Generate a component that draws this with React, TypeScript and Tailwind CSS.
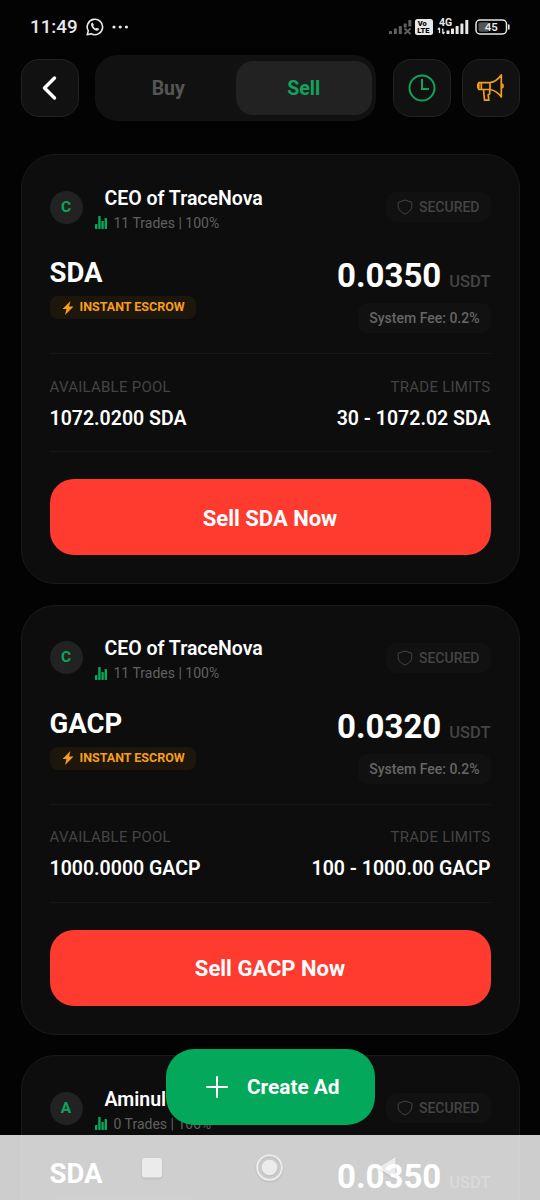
import { useState } from 'react';

type Ad = {
  name: string;
  trades: number;
  coin: string;
  price: string;
  pool: string;
  limits: string;
};

const ads: Ad[] = [
  { name: 'CEO of TraceNova', trades: 11, coin: 'SDA', price: '0.0350', pool: '1072.0200', limits: '30 - 1072.02' },
  { name: 'CEO of TraceNova', trades: 11, coin: 'GACP', price: '0.0320', pool: '1000.0000', limits: '100 - 1000.00' },
  { name: 'Aminul', trades: 0, coin: 'SDA', price: '0.0350', pool: '1072.0200', limits: '30 - 1072.02' },
];

function StatusBar() {
  return (
    <div className="flex h-[54px] shrink-0 items-center pl-[30px] pr-[29px] text-[#e8e8e8]">
      <span className="text-[18.8px] leading-5 font-medium">11:49</span>
      <svg className="ml-[8px]" width="18" height="18" viewBox="0 0 18 18" fill="none">
        <path d="M1.2 16.8 2.3 12.9A7.7 7.7 0 1 1 5.2 15.7Z" stroke="currentColor" strokeWidth="1.6" strokeLinejoin="round" />
        <path d="M5.1 6c.3-1 1.3-1.5 1.8-1l1 2-.7 1.1c.5 1.2 1.4 2 2.6 2.5l1-.9 2.1 1c.3.8-.6 2-1.9 2C8 12.6 4.8 9 5.1 6Z" fill="currentColor" />
      </svg>
      <svg className="ml-2" width="18" height="4" viewBox="0 0 18 4" fill="currentColor">
        <circle cx="2" cy="2" r="1.6" />
        <circle cx="8.2" cy="2" r="1.6" />
        <circle cx="14.4" cy="2" r="1.6" />
      </svg>
      <svg className="ml-auto" width="122" height="18" viewBox="0 0 122 18" fill="currentColor">
        <g fill="#606060">
          <rect x="0" y="13" width="3" height="3" rx=".6" />
          <rect x="4.9" y="10.5" width="3" height="5.5" rx=".6" />
          <rect x="9.8" y="8" width="3" height="8" rx=".6" />
          <rect x="14.7" y="5.5" width="3" height="4" rx=".6" />
          <rect x="19.3" y="2" width="3" height="6.5" rx=".6" />
          <path d="m15.5 10.5 6 5.5m0-5.5-6 5.5" stroke="#606060" strokeWidth="1.8" />
        </g>
        <rect x="26" y="1" width="18" height="16" rx="2.5" />
        <text x="28.8" y="8.3" fontSize="7.5" fontWeight="900" fill="#050505">Vo</text>
        <text x="28.3" y="15.3" fontSize="7.5" fontWeight="900" fill="#050505">LTE</text>
        <text x="50" y="8.3" fontSize="10.5" fontWeight="700">4G</text>
        <path d="M50.5 10v5M48.8 11.6l1.7-2M53.8 10.5v5M55.5 14l-1.7 2" stroke="currentColor" strokeWidth="1.3" />
        <rect x="57.5" y="12.5" width="3" height="3.5" rx=".5" />
        <rect x="62" y="10.5" width="3" height="5.5" rx=".5" />
        <rect x="66.6" y="8" width="3" height="8" rx=".5" />
        <rect x="71.4" y="5.5" width="3" height="10.5" rx=".5" />
        <rect x="76.3" y="2" width="3" height="14" rx=".5" />
        <rect x="87" y="2" width="30.5" height="14" rx="4" fill="none" stroke="currentColor" strokeWidth="1.5" />
        <path d="M89.5 6.2a2 2 0 0 1 2-2H99v9.6h-7.5a2 2 0 0 1-2-2Z" fill="#555" />
        <path d="M119.8 7v4" stroke="currentColor" strokeWidth="1.6" strokeLinecap="round" />
        <text x="102.3" y="13.3" fontSize="11.5" fontWeight="600" textAnchor="middle">45</text>
      </svg>
    </div>
  );
}

function MegaphoneIcon() {
  return (
    <svg className="shrink-0" width="28" height="28" viewBox="0 0 28 28" fill="none" stroke="#f59e1b" strokeWidth="1.7" strokeLinejoin="round">
      <path d="M1.8 8.7H13v6.800H1.800zM4.300 8.700v6.800M13 8.700c4.500-.7 8-3.200 11.300-7.700v22c-3.300-4.500-6.800-6.800-11.300-7.500" />
      <path d="M1.8 10.2H.8v3.600h1M24.500 10c2.200.3 2.200 3.700 0 4M6.500 15.500l1 10.700h4.300l-.6-5.400 1.500-1v-4.300" />
    </svg>
  );
}

function BarsIcon() {
  return (
    <svg className="shrink-0" width="12" height="13" viewBox="0 0 12 13" fill="#06a85a">
      <rect x="0" y="8" width="2.4" height="5" rx=".4" />
      <rect x="3.2" y="0" width="2.4" height="13" rx=".4" />
      <rect x="6.4" y="5" width="2.4" height="8" rx=".4" />
      <rect x="9.6" y="2" width="2.4" height="11" rx=".4" />
    </svg>
  );
}

function AdCard({ ad }: { ad: Ad }) {
  return (
    <div className="flex h-[430px] shrink-0 flex-col rounded-[34px] border border-[#191919] bg-[#0d0d0d] px-7 pt-[26px]">
      <div className="flex h-[52px] shrink-0 items-center justify-between">
        <div className="flex items-center">
          <div className="flex size-[33px] items-center justify-center rounded-full bg-[#222] pt-px text-[15.5px] font-bold text-[#10a35d]">
            {ad.name[0]}
          </div>
          <div className="ml-3 pt-[7px]">
            <p className="ml-[10px] text-[19.5px] leading-6 font-semibold">{ad.name}</p>
            <div className="flex h-6 items-center gap-[7px] text-sm text-[#606060]">
              <BarsIcon />
              <span>{ad.trades} Trades | 100%</span>
            </div>
          </div>
        </div>
        <div className="flex h-[30px] items-center gap-[6px] rounded-[11px] bg-[#111] px-[11px] text-sm font-medium text-[#444]">
          <svg width="16" height="16" viewBox="0 0 16 16" fill="none" stroke="currentColor">
            <path d="M8 1 1.2 3.3v4.500C1.500 11.200 4.500 13.500 8 15c3.500-1.500 6.500-3.800 6.800-7.200V3.300Z" strokeLinejoin="round" />
          </svg>
          SECURED
        </div>
      </div>

      <div className="mt-[23px] flex h-[98px] shrink-0 justify-between border-b border-[#171717]">
        <div className="pt-px">
          <p className="text-[27.5px] leading-8 font-bold">{ad.coin}</p>
          <div className="mt-[7px] flex h-[23px] items-center gap-[5px] rounded-lg bg-[#1d160c] px-[11px] text-[12.5px] font-bold text-[#f59e1b]">
            <svg width="14" height="14" viewBox="0 0 14 14" fill="currentColor">
              <path d="M9.5 0 1.5 8h4L4 14l8.5-8.5H8Z" />
            </svg>
            INSTANT ESCROW
          </div>
        </div>
        <div className="flex flex-col items-end">
          <div className="flex items-baseline gap-2">
            <span className="text-[33px] leading-10 font-bold">{ad.price}</span>
            <span className="text-[16.5px] font-medium text-[#444]">USDT</span>
          </div>
          <div className="mt-[7px] flex h-[30px] items-center rounded-[9px] bg-[#111] px-[11px] text-sm font-medium text-[#666]">
            System Fee: 0.2%
          </div>
        </div>
      </div>

      <div className="flex h-[98px] shrink-0 items-center justify-between border-b border-[#171717] pt-[2px]">
        <div>
          <p className="text-[15px] leading-5 tracking-[0.25px] text-[#444]">AVAILABLE POOL</p>
          <p className="mt-[10px] text-[19.5px] leading-6 font-semibold">{ad.pool} {ad.coin}</p>
        </div>
        <div className="text-right">
          <p className="text-[15px] leading-5 tracking-[0.25px] text-[#444]">TRADE LIMITS</p>
          <p className="mt-[10px] text-[19.5px] leading-6 font-semibold">{ad.limits} {ad.coin}</p>
        </div>
      </div>

      <button className="mt-[27px] h-[76px] shrink-0 rounded-3xl bg-[#ff3b30] pt-[2px] text-[22px] font-bold">
        Sell {ad.coin} Now
      </button>
    </div>
  );
}

export default function App() {
  const [tab, setTab] = useState('Sell');

  return (
    <div className="relative flex h-[1200px] w-[540px] flex-col overflow-hidden bg-[#030303] font-[Roboto,sans-serif] text-white">
      <StatusBar />

      <div className="flex h-[68px] shrink-0 items-center px-[20.5px]">
        <button className="flex size-[58px] shrink-0 items-center justify-center rounded-[18px] border border-[#222] bg-[#111]">
          <svg width="16" height="26" viewBox="0 0 16 26" fill="none" stroke="#fff" strokeWidth="3.4" strokeLinecap="round" strokeLinejoin="round">
            <path d="M12.5 3 2.5 13l10 10" />
          </svg>
        </button>
        <div className="ml-4 flex h-[66px] w-[281.5px] shrink-0 rounded-[22px] bg-[#111] p-[6px] pr-[4.5px]">
          {['Buy', 'Sell'].map((t) => (
            <button
              key={t}
              onClick={() => setTab(t)}
              className={`flex-1 rounded-[17px] pt-[2px] text-[19.5px] font-bold ${tab === t ? 'bg-[#222] text-[#10a35d]' : 'text-[#555]'}`}
            >
              {t}
            </button>
          ))}
        </div>
        <button className="ml-[17px] flex size-[57.5px] shrink-0 items-center justify-center rounded-[18px] border border-[#222] bg-[#111]">
          <svg width="28" height="28" viewBox="0 0 28 28" fill="none" stroke="#10a35d" strokeWidth="2">
            <circle cx="14" cy="14" r="12.5" />
            <path d="M14 5v10h7" />
          </svg>
        </button>
        <button className="ml-[11.5px] flex size-[57.5px] shrink-0 items-center justify-center rounded-[18px] border border-[#222] bg-[#111]">
          <MegaphoneIcon />
        </button>
      </div>

      <div className="mt-8 flex flex-col gap-[20.5px] px-[20.5px]">
        {ads.map((ad, i) => (
          <AdCard key={i} ad={ad} />
        ))}
      </div>

      {/* Floating action */}
      <button className="absolute top-[1049px] left-[166px] flex h-[76px] w-[209px] items-center rounded-[28px] bg-[#03a85a] pl-10 text-[20.8px] font-bold">
        <svg width="22" height="22" viewBox="0 0 22 22" stroke="#fff" strokeWidth="2" strokeLinecap="round">
          <path d="M11 1v20M1 11h20" />
        </svg>
        <span className="ml-[19px] pt-[2px]">Create Ad</span>
      </button>

      {/* Android navigation bar */}
      <div className="absolute bottom-0 left-0 h-[65px] w-full bg-white/80">
        <svg className="opacity-60 drop-shadow-[0_1px_1px_rgba(0,0,0,0.2)]" width="540" height="65" viewBox="0 0 540 65" fill="#fff">
          <rect x="142" y="23" width="20" height="19.5" rx="3" />
          <circle cx="269.5" cy="32.5" r="12.3" fill="none" stroke="#fff" strokeWidth="2" />
          <circle cx="269.5" cy="32.5" r="7.8" />
          <path d="M378 33 395.5 22v22Z" />
        </svg>
      </div>
    </div>
  );
}
